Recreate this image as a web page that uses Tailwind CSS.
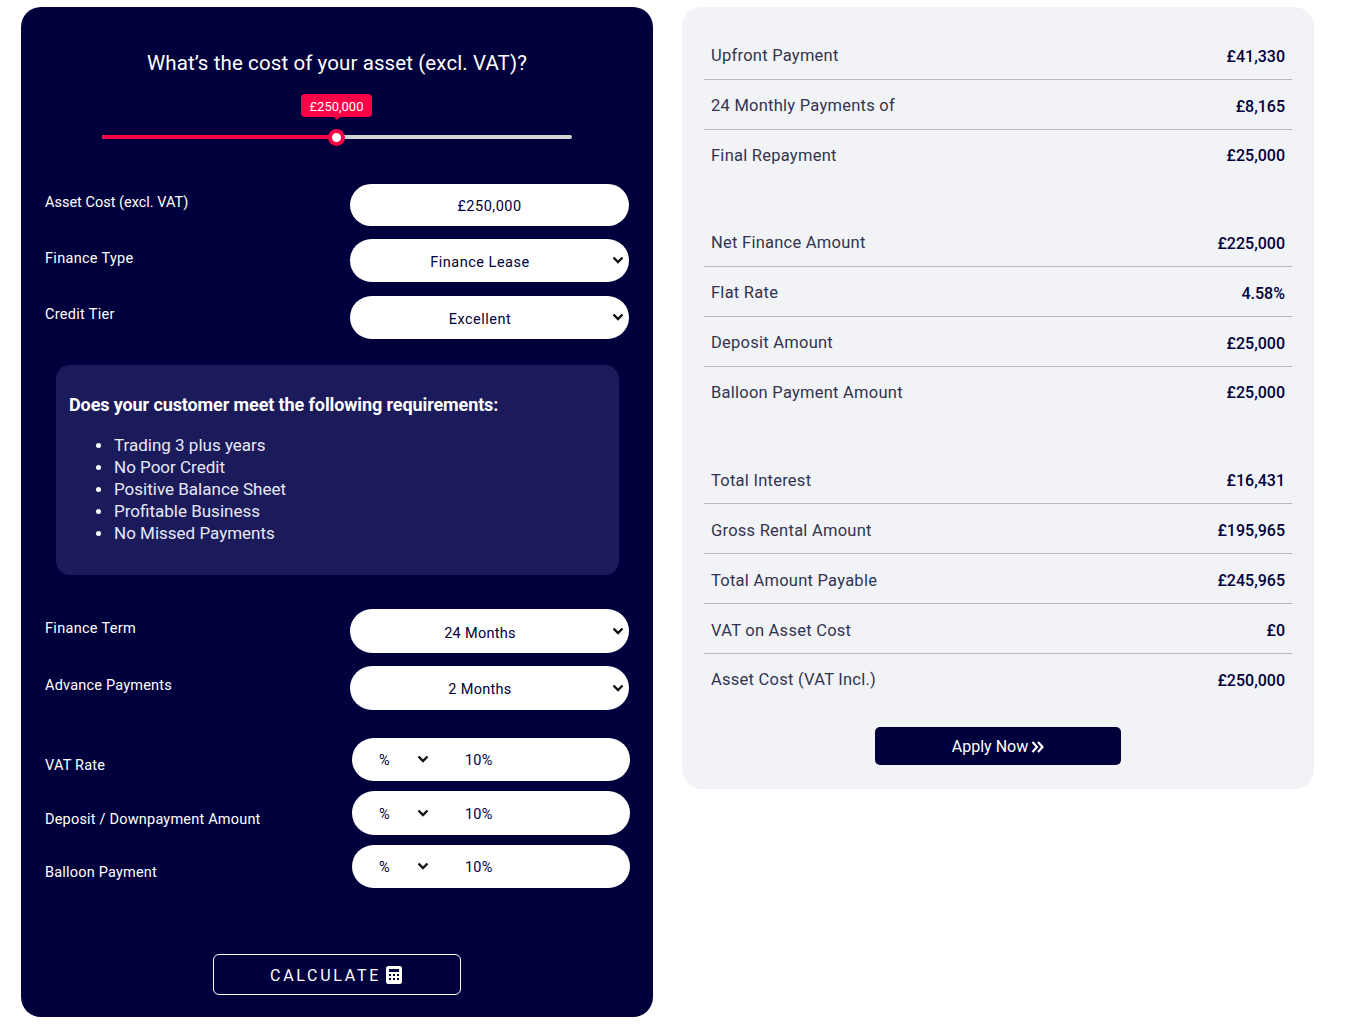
<!DOCTYPE html>
<html lang="en">
<head>
  <meta charset="UTF-8">
  <title>Finance Calculator</title>
  <script src="https://cdn.jsdelivr.net/npm/@tailwindcss/browser@4"></script>
</head>
<body class="bg-white font-['Roboto',sans-serif]">
  <div class="flex items-start gap-[29px] pl-[21px] pt-[7px]">

    <!-- calculator -->
    <div class="w-[632px] h-[1010px] bg-[#00003c] rounded-[20px] text-white">
      <h2 class="pt-[31px] h-[71px] text-center text-[20.5px] leading-[50px] tracking-[0.1px]">What’s the cost of your asset (excl. VAT)?</h2>

      <!-- slider -->
      <div class="relative mx-[81px] h-[106px]">
        <div class="absolute left-0 top-[57px] w-[470px] h-[4px] rounded-full bg-[#d4d4d4]"></div>
        <div class="absolute left-0 top-[57px] w-[235px] h-[4px] rounded-l-full bg-[#ff0048]"></div>
        <div class="absolute left-[226px] top-[51px] w-[17px] h-[17px] rounded-full bg-white border-[4px] border-[#ff0048]"></div>
        <div class="absolute left-[199px] top-[16px] w-[71px] h-[23px] rounded-[4px] bg-[#ff0048] text-center text-[13px] leading-[25px]">£250,000</div>
        <div class="absolute left-[232px] top-[39px] w-0 h-0 border-x-[3px] border-x-transparent border-t-[3px] border-t-[#ff0048]"></div>
      </div>

      <!-- top fields -->
      <div class="flex items-center justify-between pl-[24px] pr-[24px] h-[42px]">
        <span class="text-[14.5px] -mt-[5px]">Asset Cost (excl. VAT)</span>
        <div class="w-[279px] h-[42px] rounded-full bg-white text-[#00003c] text-center text-[14.5px] leading-[45px] tracking-[0.5px]">£250,000</div>
      </div>
      <div class="flex items-center justify-between pl-[24px] pr-[24px] h-[43px] mt-[13px] tracking-[0.3px]">
        <span class="text-[14.5px] -mt-[3px]">Finance Type</span>
        <div class="relative w-[279px] h-[43px] rounded-full bg-white text-[#00003c] text-center text-[14.5px] leading-[47px] tracking-[0.5px] pr-[19px]">Finance Lease
          <svg class="absolute right-[5px] top-[17px] w-[12px] h-[8px]" viewBox="0 0 12 8" fill="none" stroke="#111" stroke-width="2.4"><path d="M1.500 1.500 6 6l4.500-4.500"/></svg>
        </div>
      </div>
      <div class="flex items-center justify-between pl-[24px] pr-[24px] h-[43px] mt-[14px] tracking-[0.3px]">
        <span class="text-[14.5px] -mt-[5px]">Credit Tier</span>
        <div class="relative w-[279px] h-[43px] rounded-full bg-white text-[#00003c] text-center text-[14.5px] leading-[47px] tracking-[0.5px] pr-[19px]">Excellent
          <svg class="absolute right-[5px] top-[17px] w-[12px] h-[8px]" viewBox="0 0 12 8" fill="none" stroke="#111" stroke-width="2.4"><path d="M1.500 1.500 6 6l4.500-4.500"/></svg>
        </div>
      </div>

      <!-- requirements -->
      <div class="ml-[35px] mr-[34px] mt-[26px] h-[210px] rounded-[14px] bg-[#1b1b5c] pl-[13px] pt-[28px]">
        <h3 class="text-[18px] leading-[24px] font-bold tracking-[-0.11px]">Does your customer meet the following requirements:</h3>
        <ul class="pl-[27px] mt-[17px] text-[17px] leading-[22px] text-[#e8e8f4]">
          <li class="flex items-center"><span class="w-[5px] h-[5px] rounded-full bg-white mr-[13px]"></span>Trading 3 plus years</li>
          <li class="flex items-center"><span class="w-[5px] h-[5px] rounded-full bg-white mr-[13px]"></span>No Poor Credit</li>
          <li class="flex items-center"><span class="w-[5px] h-[5px] rounded-full bg-white mr-[13px]"></span>Positive Balance Sheet</li>
          <li class="flex items-center"><span class="w-[5px] h-[5px] rounded-full bg-white mr-[13px]"></span>Profitable Business</li>
          <li class="flex items-center"><span class="w-[5px] h-[5px] rounded-full bg-white mr-[13px]"></span>No Missed Payments</li>
        </ul>
      </div>

      <!-- term fields -->
      <div class="flex items-center justify-between pl-[24px] pr-[24px] h-[44px] mt-[34px] tracking-[0.3px]">
        <span class="text-[14.5px] -mt-[5px]">Finance Term</span>
        <div class="relative w-[279px] h-[44px] rounded-full bg-white text-[#00003c] text-center text-[14.5px] leading-[49px] tracking-[0.3px] pr-[19px]">24 Months
          <svg class="absolute right-[5px] top-[18px] w-[12px] h-[8px]" viewBox="0 0 12 8" fill="none" stroke="#111" stroke-width="2.4"><path d="M1.500 1.500 6 6l4.500-4.500"/></svg>
        </div>
      </div>
      <div class="flex items-center justify-between pl-[24px] pr-[24px] h-[44px] mt-[13px] tracking-[0.2px]">
        <span class="text-[14.5px] -mt-[5px]">Advance Payments</span>
        <div class="relative w-[279px] h-[44px] rounded-full bg-white text-[#00003c] text-center text-[14.5px] leading-[48px] tracking-[0.3px] pr-[19px]">2 Months
          <svg class="absolute right-[5px] top-[18px] w-[12px] h-[8px]" viewBox="0 0 12 8" fill="none" stroke="#111" stroke-width="2.4"><path d="M1.500 1.500 6 6l4.500-4.500"/></svg>
        </div>
      </div>

      <!-- percent fields -->
      <div class="flex items-center justify-between pl-[24px] pr-[23px] h-[43px] mt-[28px] tracking-[0.2px]">
        <span class="text-[14.5px] mt-[12px]">VAT Rate</span>
        <div class="flex items-center w-[278px] h-[43px] rounded-full bg-white text-[#00003c] text-[14.5px] pl-[27px] pt-[3px] -mt-px">
          <span class="w-[38px]">%</span>
          <svg class="w-[12px] h-[8px] -mt-[3px]" viewBox="0 0 12 8" fill="none" stroke="#111" stroke-width="2.4"><path d="M1.500 1.500 6 6l4.500-4.500"/></svg>
          <span class="ml-[36px]">10%</span>
        </div>
      </div>
      <div class="flex items-center justify-between pl-[24px] pr-[23px] h-[44px] mt-[10px] tracking-[0.2px]">
        <span class="text-[14.5px] mt-[14px]">Deposit / Downpayment Amount</span>
        <div class="flex items-center w-[278px] h-[44px] rounded-full bg-white text-[#00003c] text-[14.5px] pl-[27px] pt-[3px]">
          <span class="w-[38px]">%</span>
          <svg class="w-[12px] h-[8px] -mt-[3px]" viewBox="0 0 12 8" fill="none" stroke="#111" stroke-width="2.4"><path d="M1.500 1.500 6 6l4.500-4.500"/></svg>
          <span class="ml-[36px]">10%</span>
        </div>
      </div>
      <div class="flex items-center justify-between pl-[24px] pr-[23px] h-[43px] mt-[10px] tracking-[0.2px]">
        <span class="text-[14.5px] mt-[12px]">Balloon Payment</span>
        <div class="flex items-center w-[278px] h-[43px] rounded-full bg-white text-[#00003c] text-[14.5px] pl-[27px] pt-[2px]">
          <span class="w-[38px]">%</span>
          <svg class="w-[12px] h-[8px] -mt-[3px]" viewBox="0 0 12 8" fill="none" stroke="#111" stroke-width="2.4"><path d="M1.500 1.500 6 6l4.500-4.500"/></svg>
          <span class="ml-[36px]">10%</span>
        </div>
      </div>

      <div class="flex items-center justify-center gap-[5px] ml-[192px] mt-[66px] w-[248px] h-[41px] rounded-[6px] border border-white text-[16px] tracking-[2.7px] pr-[2px]">
        <span class="pt-[2px]">CALCULATE</span>
        <svg class="w-[16px] h-[18px]" viewBox="0 0 16 18"><path fill="#fff" fill-rule="evenodd" d="M2.500 0h11A2.500 2.500 0 0 1 16 2.500v13a2.500 2.500 0 0 1-2.500 2.500h-11A2.500 2.500 0 0 1 0 15.500v-13A2.500 2.500 0 0 1 2.500 0ZM3 3v3h10V3H3Zm0 5v2h2V8H3Zm4 0v2h2V8H7Zm4 0v2h2V8h-2Zm-8 4v2h2v-2H3Zm4 0v2h2v-2H7Zm4 0v2h2v-2h-2Z"/></svg>
      </div>
    </div>

    <!-- results -->
    <div class="w-[632px] h-[782px] bg-[#f2f3f7] rounded-[20px] px-[22px] pt-[23px] text-[16.5px] text-[#33334f] tracking-[0.25px]">
      <div class="flex justify-between items-center h-[50px] px-[7px] pt-[4px] border-b border-[#b8b8bc]"><span>Upfront Payment</span><span class="font-medium text-[16px] tracking-normal text-[#00003c]">£41,330</span></div>
      <div class="flex justify-between items-center h-[50px] px-[7px] pt-[4px] border-b border-[#b8b8bc]"><span>24 Monthly Payments of</span><span class="font-medium text-[16px] tracking-normal text-[#00003c]">£8,165</span></div>
      <div class="flex justify-between items-center h-[50px] px-[7px] pt-[2px]"><span>Final Repayment</span><span class="font-medium text-[16px] tracking-normal text-[#00003c]">£25,000</span></div>

      <div class="flex justify-between items-center h-[50px] px-[7px] pt-[4px] border-b border-[#b8b8bc] mt-[37px]"><span>Net Finance Amount</span><span class="font-medium text-[16px] tracking-normal text-[#00003c]">£225,000</span></div>
      <div class="flex justify-between items-center h-[50px] px-[7px] pt-[4px] border-b border-[#b8b8bc]"><span>Flat Rate</span><span class="font-medium text-[16px] tracking-normal text-[#00003c]">4.58%</span></div>
      <div class="flex justify-between items-center h-[50px] px-[7px] pt-[4px] border-b border-[#b8b8bc]"><span>Deposit Amount</span><span class="font-medium text-[16px] tracking-normal text-[#00003c]">£25,000</span></div>
      <div class="flex justify-between items-center h-[50px] px-[7px] pt-[2px]"><span>Balloon Payment Amount</span><span class="font-medium text-[16px] tracking-normal text-[#00003c]">£25,000</span></div>

      <div class="flex justify-between items-center h-[50px] px-[7px] pt-[5px] border-b border-[#b8b8bc] mt-[37px]"><span>Total Interest</span><span class="font-medium text-[16px] tracking-normal text-[#00003c]">£16,431</span></div>
      <div class="flex justify-between items-center h-[50px] px-[7px] pt-[5px] border-b border-[#b8b8bc]"><span>Gross Rental Amount</span><span class="font-medium text-[16px] tracking-normal text-[#00003c]">£195,965</span></div>
      <div class="flex justify-between items-center h-[50px] px-[7px] pt-[5px] border-b border-[#b8b8bc]"><span>Total Amount Payable</span><span class="font-medium text-[16px] tracking-normal text-[#00003c]">£245,965</span></div>
      <div class="flex justify-between items-center h-[50px] px-[7px] pt-[5px] border-b border-[#b8b8bc]"><span>VAT on Asset Cost</span><span class="font-medium text-[16px] tracking-normal text-[#00003c]">£0</span></div>
      <div class="flex justify-between items-center h-[50px] px-[7px] pt-[3px]"><span>Asset Cost (VAT Incl.)</span><span class="font-medium text-[16px] tracking-normal text-[#00003c]">£250,000</span></div>

      <div class="flex items-center justify-center gap-[3px] ml-[171px] mt-[23px] pt-[2px] w-[246px] h-[38px] rounded-[5px] bg-[#00003c] text-white text-[16px] tracking-normal">
        Apply Now
        <svg class="w-[13px] h-[12px]" viewBox="0 0 13 12" fill="none" stroke="#fff" stroke-width="2.2"><path d="M1.500 1 6 6l-4.500 5M7 1l4.500 5L7 11"/></svg>
      </div>
    </div>
  </div>
</body>
</html>
